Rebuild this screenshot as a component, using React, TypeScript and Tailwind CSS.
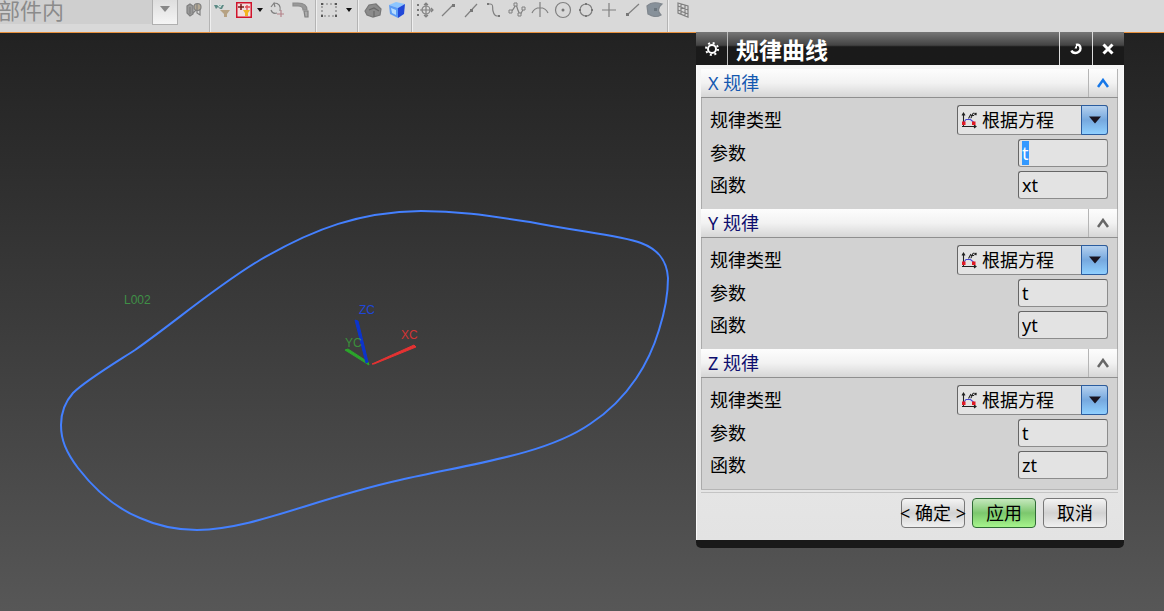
import { useEffect, useRef } from 'react';
import type { ReactNode } from 'react';

const AXES = [
  { axis: 'X', fn: 'xt', active: true },
  { axis: 'Y', fn: 'yt', active: false },
  { axis: 'Z', fn: 'zt', active: false },
];

const FIELD =
  'rounded-[3px] border border-[#8c8c8c] border-t-[#666] border-l-[#666] bg-[#e3e3e3] text-lg leading-6 text-black outline-none';

const Svg = ({ children }: { children: ReactNode }) => (
  <svg width="18" height="18" viewBox="0 0 18 18" fill="none" stroke="#808080" strokeWidth="1.2">
    {children}
  </svg>
);

const Tool = ({ label, width = 'w-6', children }: { label: string; width?: string; children: ReactNode }) => (
  <button type="button" aria-label={label} className={`flex h-5 shrink-0 items-center justify-center ${width}`}>
    {children}
  </button>
);

const Caret = () => (
  <svg width="6" height="4" viewBox="0 0 6 4">
    <path d="M0 0h6L3 4z" fill="#111" />
  </svg>
);

const Separator = () => <div className="h-8 w-0.5 shrink-0 border-l border-[#b4b4b4] bg-[#efefef]" />;

const Toolbar = () => (
  <header className="flex h-8 shrink-0 items-start bg-[#d9d9d9]">
    <div className="flex h-6 w-[152px] shrink-0 items-start bg-[#cfcfcf]">
      <span className="-ml-0.5 text-[22px] leading-5 text-[#8b8b8b]">部件内</span>
    </div>
    <button
      type="button"
      aria-label="选择范围"
      className="flex h-[25px] w-[26px] shrink-0 justify-center border-x border-b border-[#b0b0b0] bg-linear-to-b from-[#dedede] to-[#f5f5f5] pt-1.5"
    >
      <svg width="10" height="6" viewBox="0 0 10 6">
        <path d="M0 0h10L5 6z" fill="#888" />
      </svg>
    </button>
    <div className="flex px-1">
      <Tool label="装配" width="w-[23px]">
        <Svg>
          <path d="M2 5l3-2 3 2v8l-3 2-3-3zM5 6v7" fill="#999" />
          <path d="M8 12l3-3" />
          <circle cx="12.500" cy="6" r="3.500" fill="#b5aa96" />
          <path d="M12 3v9l3 2V8" />
        </Svg>
      </Tool>
    </div>
    <Separator />
    <div className="flex pr-0.5">
      <Tool label="过滤器" width="w-[22px]">
        <Svg>
          <path d="M1 4h10l-2 4H7L5 6 3 8z" fill="#5c8a85" stroke="none" />
          <path d="M4 3l3 3 2-3" stroke="#d7e3e0" />
          <path d="M7 9h10l-3 4v3h-3v-3z" fill="#b6a283" stroke="none" />
        </Svg>
      </Tool>
      <Tool label="捕捉" width="w-[22px]">
        <svg width="16" height="18" viewBox="0 0 16 18">
          <path d="M0.750 1.750h14.500v14.500H0.750z" fill="#f1dede" stroke="#d0142c" strokeWidth="1.500" />
          <path d="M5 3v6M2 6h6" stroke="#7b1a1a" strokeWidth="1.500" />
          <path d="M11 4v5M9 6h5" stroke="#e34b52" strokeWidth="1.300" />
          <path d="M7 9h7l-2 3v3h-3v-3z" fill="#f2b51f" />
        </svg>
      </Tool>
      <Tool label="捕捉选项" width="w-2.5">
        <Caret />
      </Tool>
      <Tool label="重置">
        <Svg>
          <path d="M3 6l3-4 1 4M6 2c5 0 7 3 6 8M3 9c1 3 3 4 6 3" />
          <path d="M13 9v7M9 13h7" stroke="#b5838a" />
        </Svg>
      </Tool>
      <Tool label="返回">
        <Svg>
          <path d="M1 2h5c6 0 9 2 9 7h-4c0-3-2-4-5-4H1z" fill="#999" stroke="#8c8c8c" />
          <path d="M12 10h4v6h-3z" fill="#aaa" />
        </Svg>
      </Tool>
    </div>
    <Separator />
    <div className="flex">
      <Tool label="矩形选择">
        <Svg>
          <path d="M2 3h14v12H2z" strokeDasharray="2 2" />
          <path d="M1 2h2v2H1zM15 2h2v2h-2zM1 14h2v2H1zM15 14h2v2h-2z" fill="#555" stroke="none" />
        </Svg>
      </Tool>
      <Tool label="选择选项" width="w-4">
        <Caret />
      </Tool>
    </div>
    <Separator />
    <div className="flex px-0.5">
      <Tool label="着色">
        <Svg>
          <path d="M1 10l4-6 7-1 5 5-1 6-7 2-6-2z" fill="#8b8b8b" stroke="#777" />
          <path d="M5 9l5-2 5 3M10 10v6" stroke="#696969" />
        </Svg>
      </Tool>
      <Tool label="实体">
        <svg width="18" height="18" viewBox="0 0 18 18">
          <path d="M1 4l7-3 9 2-7 4z" fill="#8cc6ff" />
          <path d="M1 4l9 3v10l-8-4z" fill="#5b9bf5" />
          <path d="M10 7l7-4-1 10-6 4z" fill="#2148d8" />
          <path d="M3 7l5 2v5l-4-2z" fill="#b5dcff" />
        </svg>
      </Tool>
    </div>
    <Separator />
    <div className="flex pr-px">
      <Tool label="移动" width="w-[23px]">
        <Svg>
          <path d="M10 2v14M4 9h13M8 4l2-2 2 2M8 14l2 2 2-2M15 7l2 2-2 2" />
          <circle cx="10" cy="9" r="4" />
          <path d="M1 3h2v2H1zM1 8h2v2H1zM1 13h2v2H1z" fill="#777" stroke="none" />
        </Svg>
      </Tool>
      <Tool label="端点" width="w-[23px]">
        <Svg>
          <path d="M3 15L14 4" />
          <path d="M13 3h3v3h-3z" fill="#777" stroke="none" />
        </Svg>
      </Tool>
      <Tool label="中点" width="w-[23px]">
        <Svg>
          <path d="M3 16L15 3" />
          <path d="M8 8h3v3H8z" fill="#777" stroke="none" />
        </Svg>
      </Tool>
      <Tool label="控制点" width="w-[23px]">
        <Svg>
          <path d="M3 3h2c4 0 2 3 3 7s2 5 4 5h3" />
          <path d="M2 2h2v2H2zM13 14h2v2h-2z" fill="#777" stroke="none" />
        </Svg>
      </Tool>
      <Tool label="极点" width="w-[23px]">
        <Svg>
          <path d="M2 11c3-1 4-4 6-8 1 4 2 7 4 11l4-7" />
          <path d="M1 9h3v3H1zM6 2h3v3H6zM10 12h3v3h-3zM14 6h3v3h-3z" fill="#d9d9d9" strokeWidth="1" />
        </Svg>
      </Tool>
      <Tool label="交点" width="w-[23px]">
        <Svg>
          <path d="M9 1v15M1 12c3-7 13-7 16 0" />
        </Svg>
      </Tool>
      <Tool label="圆心" width="w-[23px]">
        <Svg>
          <circle cx="9" cy="9" r="7.500" />
          <circle cx="9" cy="9" r="1.500" fill="#777" stroke="none" />
        </Svg>
      </Tool>
      <Tool label="象限点" width="w-[23px]">
        <Svg>
          <circle cx="9" cy="9" r="6" />
          <path d="M8 2h2v2H8zM8 14h2v2H8zM2 8h2v2H2zM14 8h2v2h-2z" fill="#777" stroke="none" />
        </Svg>
      </Tool>
      <Tool label="现有点" width="w-[23px]">
        <Svg>
          <path d="M9 2v14M2 9h14" />
        </Svg>
      </Tool>
      <Tool label="曲线上的点" width="w-[23px]">
        <Svg>
          <path d="M4 14L16 3" />
          <path d="M3 12h3v3H3z" fill="#777" stroke="none" />
        </Svg>
      </Tool>
      <Tool label="面上的点" width="w-[23px]">
        <Svg>
          <path d="M1 5c4-4 9-4 15-2-5 4-4 8-1 11-5 3-9 1-13-1z" fill="#87919a" stroke="#80878e" />
          <path d="M8 7h3v3H8z" fill="#6c767e" stroke="none" />
        </Svg>
      </Tool>
    </div>
    <Separator />
    <div className="flex pl-0.5">
      <Tool label="栅格">
        <Svg>
          <path d="M4 2l10 3v11L4 12zM7 3v10M11 4v11M4 5l10 4M4 9l10 4" />
        </Svg>
      </Tool>
    </div>
  </header>
);

const Viewport = () => (
  <svg
    className="absolute inset-0 h-full w-full"
    viewBox="0 33 1164 578"
    preserveAspectRatio="xMinYMin slice"
    fontFamily="Liberation Sans, sans-serif"
    fontSize="12"
  >
    <path
      d="M61 425C61 440 66 452 78 468C95 490 115 508 140 518C160 527 178 530 197 530C255 529 310 500 400 480C470 464 545 455 590 424C630 398 650 360 659 330C666 308 668 292 668 278C667 262 660 250 641 243C620 235 580 232 530 222C490 216 460 211 421 211C360 212 315 228 260 260C215 287 175 322 135 350C110 366 85 381 73 393C65 402 61 412 61 425Z"
      fill="none"
      stroke="#4480ff"
      strokeWidth="2"
    />
    <text x="124" y="304" fill="#3f8f46">L002</text>
    <path d="M369 365L345 350L348 349L368 362Z" fill="#2ba52b" stroke="#2ba52b" />
    <path d="M372 364L414 345L416 347L374 364Z" fill="#e63232" stroke="#e63232" />
    <path d="M366 363L355 320L358 321L368 362Z" fill="#0c34cc" stroke="#0c34cc" />
    <text x="345" y="347" fill="#3b8f3b">YC</text>
    <text x="401" y="339" fill="#d23434">XC</text>
    <text x="359" y="314" fill="#1f46d8">ZC</text>
  </svg>
);

const EquationIcon = () => (
  <svg width="18" height="18" viewBox="0 0 18 18" fill="none" stroke="#222" strokeWidth="1.1">
    <path d="M3.500 2v14M2 4.500L3.500 2 5 4.500M2 15.500h14M14 14l2 1.500-2 1.500" />
    <path d="M3.500 11.500L6 8.500h4.500l3.500 3" stroke="#4a4ad0" />
    <path d="M8.500 7.500L11 3M10.500 7c2 0 1-5 3.500-5M11 4.500h3M14.500 4l2-2M14.500 2l2 2" />
    <path d="M2 10.500h3.500v3.500H2zM12 10.500h3.500v3.500H12z" fill="#e01a24" stroke="none" />
  </svg>
);

interface RuleSectionProps {
  axis: string;
  fn: string;
  active: boolean;
}

const RuleSection = ({ axis, fn, active }: RuleSectionProps) => {
  const paramRef = useRef<HTMLInputElement>(null);

  useEffect(() => {
    if (active) {
      paramRef.current?.focus();
      paramRef.current?.select();
    }
  }, [active]);

  return (
    <section>
      <div className="flex h-[29px] items-stretch border-b border-[#8f8f8f] bg-linear-to-b from-[#fdfdfd] from-0% via-[#f2f2f2] via-50% to-[#d6d6d6] to-100%">
        <h2 className={`flex-1 pl-[7px] text-lg leading-7 ${active ? 'text-[#1458b0]' : 'text-[#0e0e6e]'}`}>
          {axis} 规律
        </h2>
        <button
          type="button"
          aria-label={`收起 ${axis} 规律`}
          className="flex w-[30px] items-center justify-center border-x border-[#b5b5b5]"
        >
          <svg
            width="12"
            height="10"
            viewBox="0 0 12 10"
            fill="none"
            stroke={active ? '#1677e8' : '#666'}
            strokeWidth="2.5"
          >
            <path d="M1 9l5-7 5 7" />
          </svg>
        </button>
      </div>
      <div className="flex flex-col gap-1 border-x border-[#aaa] bg-[#d2d2d2] pt-[7px] pr-[9px] pb-2.5 pl-2 text-lg leading-7 text-black">
        <div className="flex h-[30px] items-center justify-between">
          <label htmlFor={`type-${axis}`}>规律类型</label>
          <div className="relative w-[151px]">
            <select
              id={`type-${axis}`}
              defaultValue="equation"
              className={`h-[30px] w-full appearance-none pr-7 pl-6 ${FIELD}`}
            >
              <option value="equation">根据方程</option>
              <option value="constant">恒定</option>
              <option value="linear">线性</option>
            </select>
            <div className="pointer-events-none absolute inset-y-0 left-[3px] flex items-center">
              <EquationIcon />
            </div>
            <div className="pointer-events-none absolute inset-y-0 right-0 flex w-[27px] items-center justify-center rounded-r-[3px] border border-[#2b5c9e] bg-linear-to-b from-[#b4d0ee] from-0% via-[#76a8de] via-50% to-[#8fd0ff] to-100%">
              <svg width="12" height="8" viewBox="0 0 12 8">
                <path d="M0 0.500h12L6 7.500z" fill="#1a1420" />
              </svg>
            </div>
          </div>
        </div>
        <div className="flex h-7 items-center justify-between">
          <label htmlFor={`param-${axis}`}>参数</label>
          <input
            ref={paramRef}
            id={`param-${axis}`}
            defaultValue="t"
            className={`h-7 w-[90px] px-[3px] selection:bg-[#3399ff] selection:text-white ${FIELD}`}
          />
        </div>
        <div className="flex h-7 items-center justify-between">
          <label htmlFor={`fn-${axis}`}>函数</label>
          <input id={`fn-${axis}`} defaultValue={fn} className={`h-7 w-[90px] px-[3px] ${FIELD}`} />
        </div>
      </div>
    </section>
  );
};

const BUTTON =
  'flex h-[30px] w-16 items-center justify-center whitespace-nowrap rounded-[4px] border text-lg leading-6 text-black';
const PLAIN =
  'border-[#777] bg-linear-to-b from-[#f4f4f4] from-0% via-[#d2d2d2] via-50% to-[#f0f0f0] to-100%';

const LawCurveDialog = () => (
  <div
    role="dialog"
    aria-label="规律曲线"
    className="absolute -top-px right-10 w-[428px] overflow-hidden rounded-b-[5px] border-b-8 border-[#191919] bg-[#ececec]"
  >
    <div className="flex h-[33px] items-stretch bg-linear-to-b from-[#777] from-0% via-[#444] via-40% to-[#1a1a1a] to-45% text-white">
      <button
        type="button"
        aria-label="设置"
        className="flex w-8 items-center justify-center border-r border-[#bbb]"
      >
        <svg width="16" height="16" viewBox="0 0 16 16" fill="none" stroke="#fff">
          <circle cx="8" cy="8" r="4" strokeWidth="2" />
          <circle cx="8" cy="8" r="6" strokeWidth="2" strokeDasharray="2 2.712" />
        </svg>
      </button>
      <h1 className="flex-1 pl-2 text-[23px] leading-9 font-bold">规律曲线</h1>
      <button
        type="button"
        aria-label="重置"
        className="flex w-[33px] items-center justify-center border-l border-[#ddd]"
      >
        <svg width="12" height="12" viewBox="0 0 12 12" fill="none" stroke="#fff" strokeWidth="2.4">
          <path d="M6 2c3-1 4.500 1 4.500 3.500S8 10 5.500 10C3.500 10 2 9 1.500 7.500" />
          <path d="M4.500 5.500L7 0.500v5z" fill="#fff" stroke="none" />
        </svg>
      </button>
      <button
        type="button"
        aria-label="关闭"
        className="flex w-8 items-center justify-center border-l border-[#ddd] pr-0.5"
      >
        <svg width="12" height="12" viewBox="0 0 12 12" stroke="#fff" strokeWidth="3">
          <path d="M1.500 1.500l9 9M10.500 1.500l-9 9" />
        </svg>
      </button>
    </div>
    <div className="border-x border-[#fafafa] bg-linear-to-b from-[#f6f6f6] to-[#e3e3e3] pt-1 pr-[5px] pb-3 pl-1">
      {AXES.map((a) => (
        <RuleSection key={a.axis} {...a} />
      ))}
      <div className="border-t border-[#b5b5b5] pt-0.5">
        <div className="flex justify-end gap-[7px] border-t border-[#c4c4c4] pt-[5px] pr-[11px]">
          <button type="button" className={`${BUTTON} ${PLAIN}`}>
            &lt; 确定 &gt;
          </button>
          <button
            type="button"
            className={`${BUTTON} border-[#2f6b35] bg-linear-to-b from-[#c5e8bd] from-0% via-[#7cc76d] via-50% to-[#a6f58c] to-100%`}
          >
            应用
          </button>
          <button type="button" className={`${BUTTON} ${PLAIN}`}>
            取消
          </button>
        </div>
      </div>
    </div>
  </div>
);

export default function App() {
  return (
    <div className="flex min-h-screen flex-col font-['Noto_Sans','Noto_Sans_CJK_SC',sans-serif]">
      <Toolbar />
      <main className="relative flex-1 border-t border-[#e8903c] bg-linear-to-b from-[#222] to-[#575757]">
        <Viewport />
        <LawCurveDialog />
      </main>
    </div>
  );
}
